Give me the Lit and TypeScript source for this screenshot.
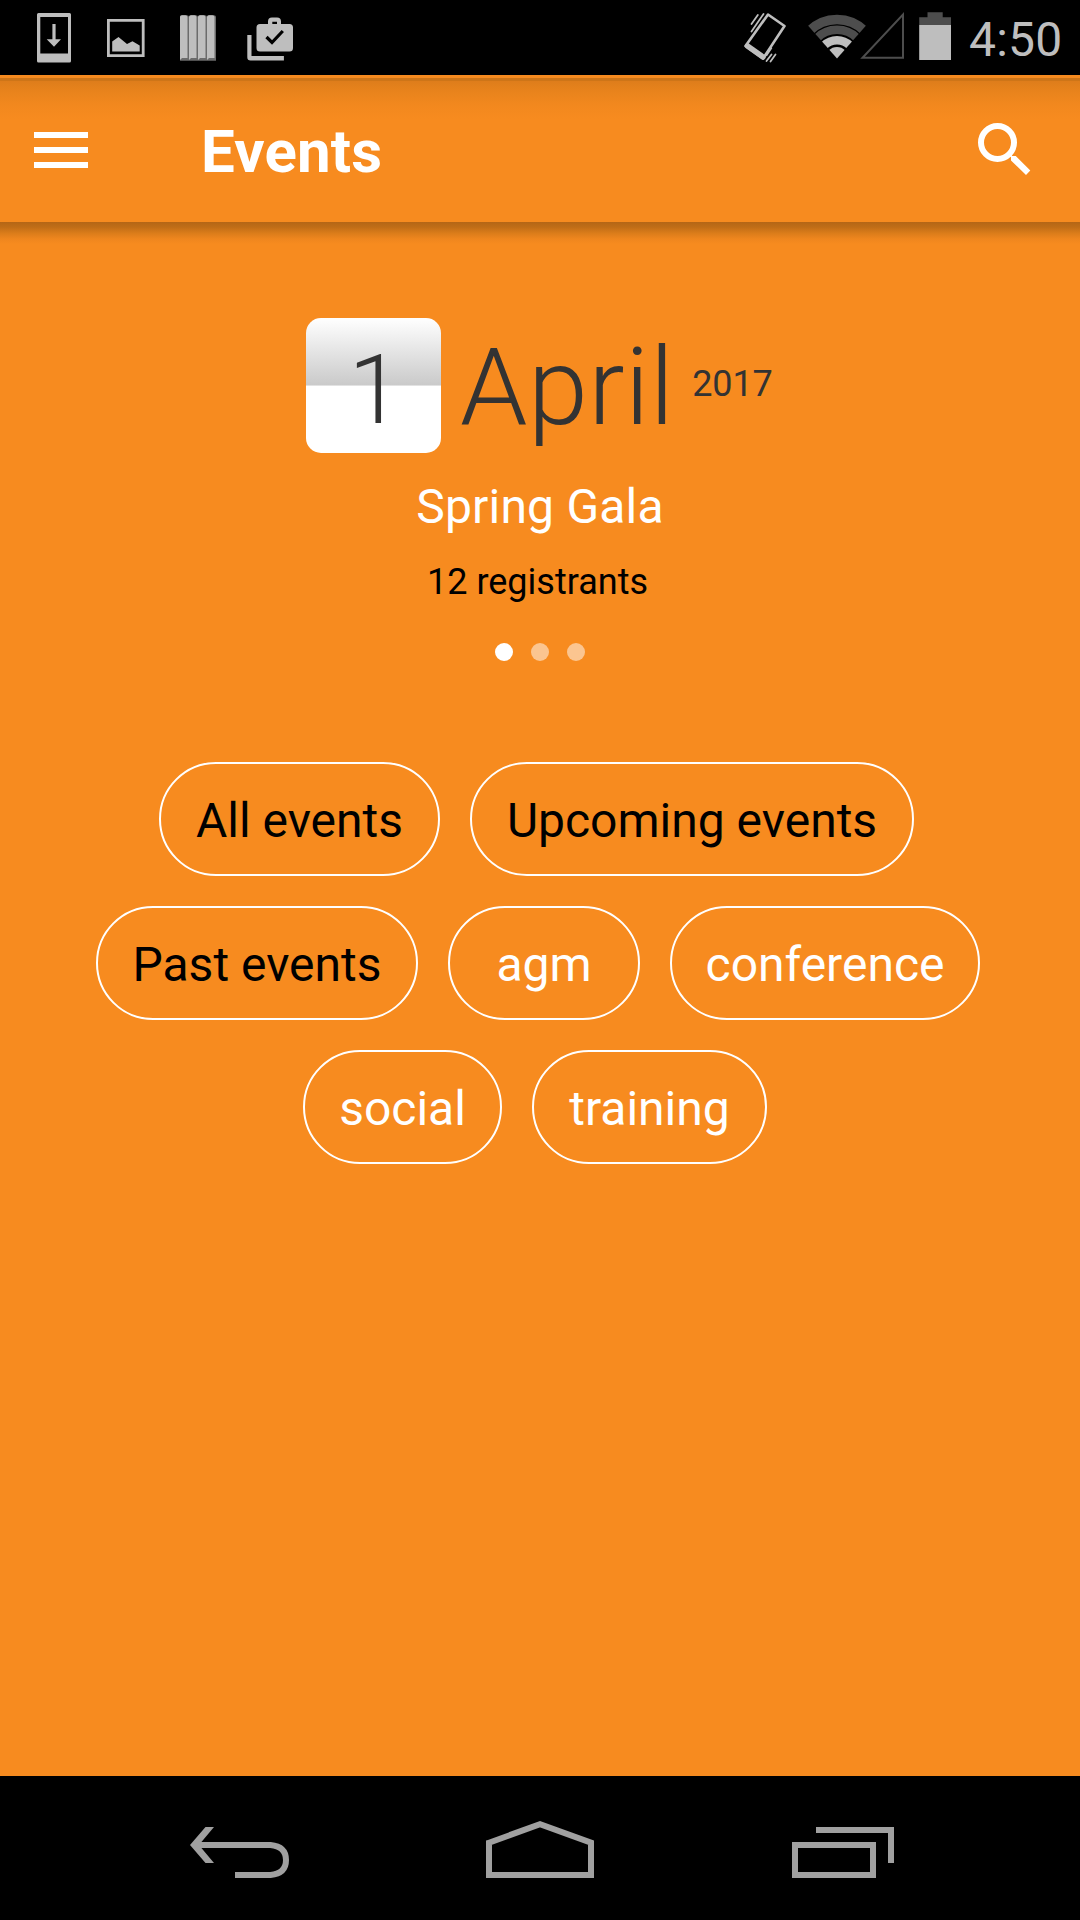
import { LitElement, html, css, svg } from "lit";
import { customElement, property } from "lit/decorators.js";

interface Chip {
  label: string;
  kind: "fixed" | "tag";
  width: number;
}

@customElement("status-bar")
class StatusBar extends LitElement {
  static styles = css`
    :host { display: flex; height: 75px; background: #000; color: #bebebe; }
    .icons { display: block; height: 75px; }
    .spacer { flex: 1; }
    .clock { width: 120px; padding-left: 9px; box-sizing: border-box; font-size: 48px; line-height: 80px; letter-spacing: 0.2px; white-space: nowrap; }
  `;
  render() {
    return html`
      <svg class="icons" width="310" viewBox="0 0 310 75" fill="#bebebe">
        <path fill-rule="evenodd" d="M38.5 13H69.5Q71 13 71 14.5V61Q71 62.6 69.5 62.6H38.5Q37 62.6 37 61V14.5Q37 13 38.5 13ZM40.3 17V53.5H68V17Z" />
        <path d="M52.4 24h3.2v15.3h5.4l-7 7.4-7.3-7.4h5.7z" />
        <path fill-rule="evenodd" d="M107 19h37.6v38H107zM109.8 21.8v32.4h32v-32.4z" />
        <path d="M112.2 41.5l6.3-4.5 8.5 7 5.5-2.7 7.2 4.2v6h-27.5z" />
        ${[180, 189, 198, 207].map(
          (x) => svg`
            <path d="M${x} 17q0-1.8 2-1.8h5q2 0 2 1.8v43.7h-9z" fill="#6b6b6b" />
            <path d="M${x} 17q0-1.8 2-1.8h3.5q2 0 2 1.8v41h-5.5l-2 2z" />`
        )}
        <path d="M247.3 35h4.2v21h32.4v4.6h-33.3q-3.3 0-3.3-3.3z" />
        <path fill-rule="evenodd" d="M260 24h8v-2.500q0-4 4-4h5q4 0 4 4V24h8.500q3.500 0 3.500 3.500V48q0 3.500-3.500 3.500H260q-3.500 0-3.500-3.500V27.500q0-3.500 3.500-3.500ZM272.300 24h4.700v-2.200h-4.700z" />
        <path d="M266.500 37l5.500 5.500 10.800-11.500" fill="none" stroke="#000" stroke-width="3.200" />
      </svg>
      <div class="spacer"></div>
      <svg class="icons" width="220" viewBox="740 0 220 75">
        <g fill="none" stroke="#bebebe">
          <path d="M768 14.500l16.500 11.500-21.500 32.500-17.500-12.500z" stroke-width="2.600" stroke-linejoin="round" />
          <path d="M747.500 46l15.500 11" stroke-width="5.500" stroke-linecap="round" />
          <path d="M751.500 24l6.300-9M751.500 31.500L763.500 14" stroke-width="1.800" stroke-linecap="round" />
          <path d="M766.500 61l5-6.500M770.500 61.500l5-7" stroke-width="1.800" stroke-linecap="round" />
          <path d="M766.500 55.500l5-7.500" stroke-width="1.500" stroke-linecap="round" />
        </g>
        <defs><clipPath id="fan"><path d="M837 58.400L796 12H878Z" /></clipPath></defs>
        <g clip-path="url(#fan)" fill="none">
          <circle cx="837" cy="58.400" r="39" stroke="#4d4d4d" stroke-width="9.500" />
          <circle cx="837" cy="58.400" r="28.600" stroke="#4d4d4d" stroke-width="8.600" />
          <circle cx="837" cy="58.400" r="18.200" stroke="#bebebe" stroke-width="8.600" />
          <circle cx="837" cy="58.400" r="11.500" fill="#bebebe" />
        </g>
        <path d="M862.500 57.800H903V14.500Z" fill="none" stroke="#4d4d4d" stroke-width="2" />
        <path d="M919.200 25v-7.800h8.300v-5h15.200v5h8.300V25z" fill="#4d4d4d" />
        <path d="M919.200 25H951v35h-31.800z" fill="#bebebe" />
      </svg>
      <div class="clock">4:50</div>
    `;
  }
}

@customElement("app-toolbar")
class AppToolbar extends LitElement {
  @property() heading = "";
  static styles = css`
    :host {
      display: flex; height: 147px; align-items: flex-start; color: #fff;
      background:
        linear-gradient(#f78b1f 0 3px, #ce7518 3px 6px, #de7d1b 6px, #e8831c 16px, #f2881e 30px, #f78b1f 44px);
    }
    .menu { margin: 57px 0 0 34px; display: flex; flex-direction: column; gap: 9px; }
    .bar { width: 54px; height: 6px; background: #fff; }
    .heading { margin: 0 0 0 113px; padding-top: 41px; flex: 1; font-size: 60px; font-weight: 700; line-height: 72px; letter-spacing: 0.2px; }
    .search { margin: 45px 45px 0 0; display: block; }
  `;
  render() {
    return html`
      <div class="menu"><div class="bar"></div><div class="bar"></div><div class="bar"></div></div>
      <h1 class="heading">${this.heading}</h1>
      <svg class="search" width="60" height="60" viewBox="975 120 60 60">
        <circle cx="997.500" cy="142.500" r="16.500" fill="none" stroke="#fff" stroke-width="6" />
        <path d="M1010.500 154l1.800 2h3.500l14.500 14.600-4.300 4.500-15-14.700v-3.200l-2-1.900z" fill="#fff" />
      </svg>
    `;
  }
}

@customElement("event-card")
class EventCard extends LitElement {
  static styles = css`
    :host { display: flex; flex-direction: column; align-items: center; padding-top: 96px; }
    .date { display: flex; align-self: stretch; padding-left: 306px; height: 135px; color: #333; }
    .tile {
      width: 135px; height: 135px; border-radius: 15px; box-sizing: border-box; text-align: center; padding-left: 3px;
      background: linear-gradient(#fff 0, #cacaca 67px, #e2e2e2 67px, #e2e2e2 68px, #fff 68px);
      font-size: 96px; font-weight: 300; line-height: 144px;
    }
    .month { margin-left: 19px; font-size: 108px; font-weight: 300; line-height: 138px; letter-spacing: 0.4px; }
    .year { margin-left: 18px; font-size: 36px; line-height: 133px; letter-spacing: -0.2px; }
    .title { margin-top: 25px; font-size: 48px; line-height: 58px; letter-spacing: 0.2px; color: #fff; }
    .count { margin-top: 24px; padding-right: 5px; font-size: 36px; line-height: 44px; color: #000; }
    .dots { margin-top: 39px; display: flex; gap: 18px; }
    .dot { width: 18px; height: 18px; border-radius: 50%; background: #fbc590; }
    .on { background: #fff; }
  `;
  render() {
    return html`
      <div class="date">
        <div class="tile">1</div>
        <div class="month">April</div>
        <div class="year">2017</div>
      </div>
      <div class="title">Spring Gala</div>
      <div class="count">12 registrants</div>
      <div class="dots"><div class="dot on"></div><div class="dot"></div><div class="dot"></div></div>
    `;
  }
}

@customElement("filter-chips")
class FilterChips extends LitElement {
  static styles = css`
    :host { display: flex; flex-direction: column; gap: 30px; padding-top: 101px; }
    .row { display: flex; justify-content: center; gap: 30px; }
    .row:nth-child(1) { padding-right: 7px; }
    .row:nth-child(2) { padding-right: 4px; }
    .row:nth-child(3) { padding-right: 10px; }
    .chip {
      height: 114px; box-sizing: border-box; border: 2px solid #fff; border-radius: 57px;
      display: flex; justify-content: center; font-size: 48px; line-height: 113px; white-space: nowrap;
    }
    .fixed { color: #000; }
    .tag { color: #fff; }
  `;
  private rows: Chip[][] = [
    [{ label: "All events", kind: "fixed", width: 281 }, { label: "Upcoming events", kind: "fixed", width: 444 }],
    [
      { label: "Past events", kind: "fixed", width: 322 },
      { label: "agm", kind: "tag", width: 192 },
      { label: "conference", kind: "tag", width: 310 },
    ],
    [{ label: "social", kind: "tag", width: 199 }, { label: "training", kind: "tag", width: 235 }],
  ];
  render() {
    return this.rows.map(
      (row) => html`<div class="row">${row.map(
        (c) => html`<div class="chip ${c.kind}" style="width:${c.width}px">${c.label}</div>`
      )}</div>`
    );
  }
}

@customElement("nav-bar")
class NavBar extends LitElement {
  static styles = css`
    :host { display: flex; height: 144px; background: #000; padding: 0 186px; justify-content: space-between; }
    .key { display: block; }
  `;
  render() {
    return html`
      <svg class="key" width="108" height="144" viewBox="186 1776 108 144">
        <path d="M198 1845H270.500Q286 1846.500 286 1860T270.500 1875H235" fill="none" stroke="#a0a0a0" stroke-width="6" />
        <path d="M190 1845l15.500-18h8.500l-13 15.500v5l13 15.500h-8.500z" fill="#a0a0a0" />
      </svg>
      <svg class="key" width="108" height="144" viewBox="486 1776 108 144">
        <path d="M489 1842.700L540 1824.200L591 1842.700V1875H489Z" fill="none" stroke="#a0a0a0" stroke-width="6" />
      </svg>
      <svg class="key" width="108" height="144" viewBox="786 1776 108 144">
        <path d="M795 1845h78v30h-78zM816 1830h75v33" fill="none" stroke="#a0a0a0" stroke-width="6" />
      </svg>
    `;
  }
}

@customElement("app-root")
class AppRoot extends LitElement {
  static styles = css`
    :host {
      display: flex; flex-direction: column; width: 1080px; height: 1920px; overflow: hidden;
      background: #f78b1f; font-family: Roboto, "Liberation Sans", sans-serif;
    }
    .content {
      flex: 1;
      background: linear-gradient(#b46616 0, #c06d17 5px, #da7c1a 11px, #ef861e 17px, #f78b1f 22px);
    }
  `;
  render() {
    return html`
      <status-bar></status-bar>
      <app-toolbar heading="Events"></app-toolbar>
      <main class="content">
        <event-card></event-card>
        <filter-chips></filter-chips>
      </main>
      <nav-bar></nav-bar>
    `;
  }
}
